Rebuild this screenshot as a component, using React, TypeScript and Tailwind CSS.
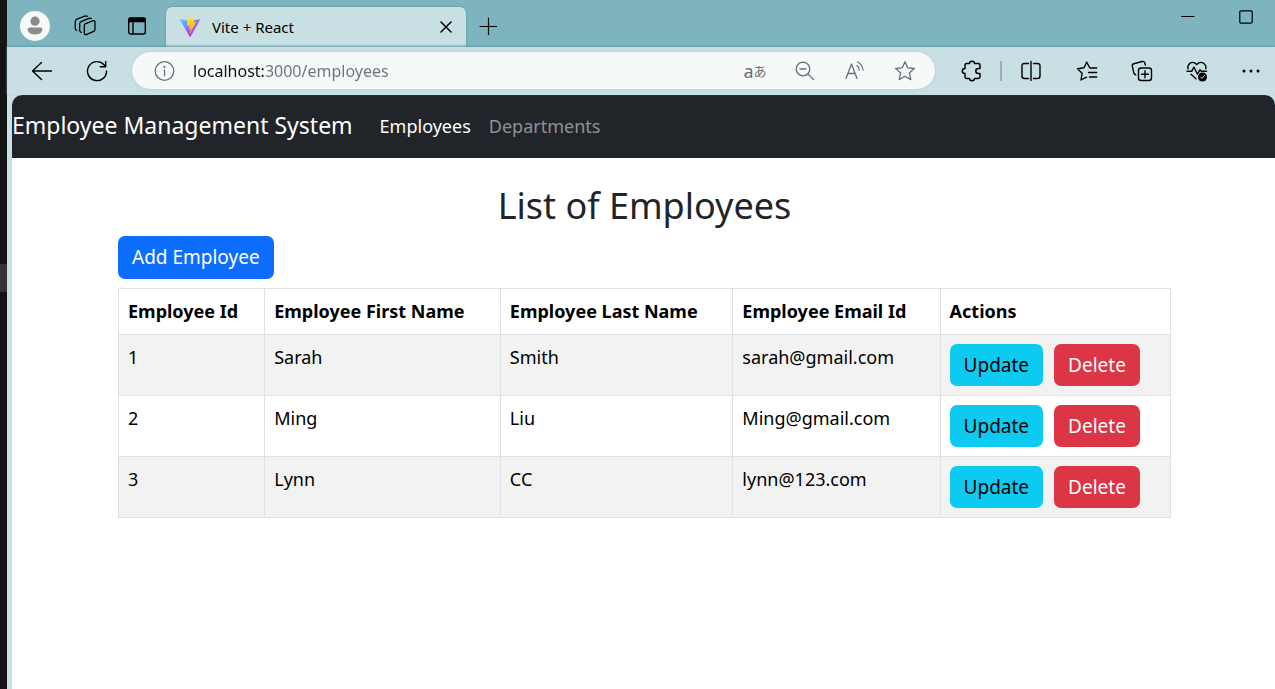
import React from "react";

type Employee = { id: number; first: string; last: string; email: string };

const employees: Employee[] = [
  { id: 1, first: "Sarah", last: "Smith", email: "sarah@gmail.com" },
  { id: 2, first: "Ming", last: "Liu", email: "Ming@gmail.com" },
  { id: 3, first: "Lynn", last: "CC", email: "lynn@123.com" },
];

function Icon({ size = 22, width = 1.4, children }: { size?: number; width?: number; children: React.ReactNode }) {
  return (
    <svg
      width={size}
      height={size}
      viewBox={`0 0 ${size} ${size}`}
      fill="none"
      stroke="currentColor"
      strokeWidth={width}
      strokeLinecap="round"
      strokeLinejoin="round"
      aria-hidden="true"
      className="shrink-0"
    >
      {children}
    </svg>
  );
}

function IconButton({ label, className, children }: { label: string; className: string; children: React.ReactNode }) {
  return (
    <button type="button" aria-label={label} className={`flex h-9 shrink-0 items-center justify-center ${className}`}>
      {children}
    </button>
  );
}

function ViteLogo() {
  return (
    <svg width="20" height="20" viewBox="0 0 256 257" aria-hidden="true" className="shrink-0">
      <defs>
        <linearGradient id="viteBody" x1="0%" x2="58%" y1="8%" y2="79%">
          <stop offset="0%" stopColor="#41D1FF" />
          <stop offset="100%" stopColor="#BD34FE" />
        </linearGradient>
        <linearGradient id="viteBolt" x1="43%" x2="50%" y1="2%" y2="89%">
          <stop offset="0%" stopColor="#FFEA83" />
          <stop offset="8%" stopColor="#FFDD35" />
          <stop offset="100%" stopColor="#FFA800" />
        </linearGradient>
      </defs>
      <path
        fill="url(#viteBody)"
        d="M255.153 37.938L134.897 252.976c-2.483 4.44-8.862 4.466-11.382.048L.875 37.958c-2.746-4.814 1.371-10.646 6.827-9.67l120.385 21.517a6.537 6.537 0 0 0 2.322-.004l117.867-21.483c5.438-.991 9.574 4.796 6.877 9.62Z"
      />
      <path
        fill="url(#viteBolt)"
        d="M185.432.063L96.44 17.501a3.268 3.268 0 0 0-2.634 3.014l-5.474 92.456a3.268 3.268 0 0 0 3.997 3.378l24.777-5.718c2.318-.535 4.413 1.507 3.936 3.838l-7.361 36.047c-.495 2.426 1.782 4.5 4.151 3.78l15.304-4.649c2.372-.72 4.652 1.36 4.15 3.788l-11.698 56.621c-.732 3.542 3.979 5.473 5.943 2.437l1.313-2.028l72.516-144.72c1.215-2.423-.88-5.186-3.54-4.672l-25.505 4.922c-2.396.462-4.435-1.77-3.759-4.114l16.646-57.705c.677-2.35-1.37-4.583-3.769-4.113Z"
      />
    </svg>
  );
}

function TitleBar() {
  return (
    <header className="flex h-[47px] items-start bg-[#7eb4be] pl-[3px] text-black">
      <div className="flex items-center pt-2">
        <IconButton label="Profile" className="w-[50px]">
          <svg width="30" height="30" viewBox="0 0 30 30" aria-hidden="true">
            <circle cx="15" cy="15" r="15" fill="#f7f9f9" />
            <circle cx="15" cy="10.2" r="4.6" fill="#8b8b8b" />
            <path d="M9.500 16.500h11a1.800 1.800 0 0 1 1.800 1.800c0 3.500-3.300 5.200-7.300 5.200s-7.300-1.700-7.300-5.200a1.800 1.800 0 0 1 1.800-1.800Z" fill="#8b8b8b" />
          </svg>
        </IconButton>
        <IconButton label="Workspaces" className="w-[50px]">
          <Icon width={1.3}>
            <path d="M11.200 8.800 18.500 5.900Q21 5.100 21 7.300V14.300Q21 15.700 19.700 16.300L12.800 19.300Q10.300 20.200 10.300 18V10.400Q10.300 9.300 11.200 8.800Z" />
            <path d="M17.300 3.500Q16.500 2.700 15 3.300L7.500 6.300Q5.700 7.200 5.700 8.800V15.500Q5.700 17 7.300 17.300" />
            <path d="M13.200 1.300Q12.300 .600 10.800 1.200L3 4.200Q1.200 5 1.200 6.800V13.500Q1.200 15 2.800 15.500" />
          </Icon>
        </IconButton>
        <IconButton label="Tab actions" className="w-[54px]">
          <Icon size={20}>
            <rect x="1.700" y="2" width="16.600" height="16" rx="2" />
            <path d="M2 2.500h16v3H2z" fill="currentColor" />
            <path d="M6 6v12" />
          </Icon>
        </IconButton>
      </div>
      <div className="mt-[7px] ml-[2px] flex h-10 w-[300px] items-center rounded-t-md bg-[#c8dfe3] pr-[10px] pl-[14px] shadow-[0_0_2px_#4d838d]">
        <ViteLogo />
        <span className="ml-3 flex-1 text-[15px] leading-5">Vite + React</span>
        <IconButton label="Close tab" className="w-5">
          <Icon size={12} width={1.5}>
            <path d="m1 1 10 10M11 1 1 11" />
          </Icon>
        </IconButton>
      </div>
      <IconButton label="New tab" className="mt-2 w-[43px]">
        <Icon size={18} width={1.2}>
          <path d="M9.500 1v17M1 9.500h17" />
        </Icon>
      </IconButton>
      <div className="ml-auto flex">
        <IconButton label="Minimize" className="h-[34px] w-[57px]">
          <Icon size={14} width={1}>
            <path d="M.500 6.500h12.500" />
          </Icon>
        </IconButton>
        <IconButton label="Maximize" className="h-[34px] w-[59px]">
          <Icon size={14} width={1.2}>
            <rect x=".800" y=".800" width="12.400" height="12.400" rx="1.200" />
          </Icon>
        </IconButton>
      </div>
    </header>
  );
}

function Toolbar() {
  return (
    <div className="relative flex h-12 items-center bg-[#c8dfe3] pb-px pl-[7px] text-black shadow-[0_-1px_2px_#5f98a3]">
      <IconButton label="Back" className="w-[55px]">
        <Icon>
          <path d="M1.500 11h19M10.500 2.500 1.500 11l9 8.500" />
        </Icon>
      </IconButton>
      <IconButton label="Refresh" className="w-[55px]">
        <Icon>
          <path d="M20.500 11a9.500 9.500 0 1 1-2.500-6.300L19.500 6.500M19.700 1.500v5.300h-5.500" />
        </Icon>
      </IconButton>
      <div className="ml-2 flex h-[37px] flex-1 items-center rounded-full bg-[#f5f9fa] pr-[5px] pl-[22px] text-[#6c7072] shadow-[0_0_3px_#b2ccd1]">
        <Icon width={1.3}>
          <circle cx="10.500" cy="11" r="9.300" />
          <path d="M10.500 10v5.500" />
          <circle cx="10.500" cy="6.800" r=".500" fill="currentColor" />
        </Icon>
        <input
          type="text"
          aria-label="Address"
          defaultValue="localhost:3000/employees"
          className="ml-[17px] h-8 min-w-0 flex-1 bg-[linear-gradient(90deg,#111_72px,#6f7375_72px)] bg-clip-text text-base text-transparent caret-black outline-none"
        />
        <IconButton label="Translate" className="w-[50px]">
          <span className="flex items-center leading-6">
            <span className="text-lg leading-6">a</span>
            <span className="font-['Noto_Sans_CJK_JP',sans-serif] text-[13px] leading-5">あ</span>
          </span>
        </IconButton>
        <IconButton label="Zoom out" className="w-[50px]">
          <Icon width={1.3}>
            <circle cx="9" cy="9" r="6.800" />
            <path d="m14 14 5.500 5.500M6 9h6" />
          </Icon>
        </IconButton>
        <IconButton label="Read aloud" className="w-[50px]">
          <Icon width={1.3}>
            <path d="M2 18.500 7.500 4 13 18.500M4 13.500h7M13 5.500q2.200 1.500 2.200 4.500M13.500 2q5 2.500 5.500 8" />
          </Icon>
        </IconButton>
        <IconButton label="Add to favorites" className="w-[50px]">
          <Icon width={1.3}>
            <path d="M11 1.800 13.700 7.800 20.300 8.500 15.400 13 16.800 19.600 11 16.300 5.200 19.600 6.600 13 1.700 8.500 8.300 7.800Z" />
          </Icon>
        </IconButton>
      </div>
      <IconButton label="Extensions" className="ml-[9px] w-[55px]">
        <Icon width={1.5}>
          <path d="M7.300 3.500H5.700Q4 3.500 4 5.200V8.500Q1.300 8.500 1.300 11T4 13.500V16.800Q4 18.500 5.700 18.500H8.500Q8.500 20.700 11 20.700T13.500 18.500H17.300Q19 18.500 19 16.800V13.500H17.500Q14.800 13.500 14.800 11T17.500 8.500H19V5.200Q19 3.500 17.300 3.500H13.500Q13.500 1.300 11 1.300T8.500 3.500Z" />
        </Icon>
      </IconButton>
      <span className="mx-px h-5 w-[2px] bg-[#9cb1b5]" />
      <IconButton label="Split screen" className="w-[56px]">
        <Icon>
          <path d="M8.500 3.500H4.500Q2 3.500 2 6V16Q2 18.500 4.500 18.500H8.500M13.500 3.500H17.500Q20 3.500 20 6V16Q20 18.500 17.500 18.500H13.500M11 1.500v19" />
        </Icon>
      </IconButton>
      <IconButton label="Favorites" className="w-[55px]">
        <Icon>
          <path d="M14.500 7.800 13.500 7.500 10.700 2 8 7.700 1.500 8.700 6.100 13.300 5 20 10.500 17.200M14 8h6.700M12.500 12.500h8.200M13.500 17h7.200" />
        </Icon>
      </IconButton>
      <IconButton label="Collections" className="w-[55px]">
        <Icon>
          <rect x="7.500" y="8" width="13" height="12.500" rx="2.500" />
          <path d="M14 10.700v7M10.500 14.200h7M4.700 14.800Q3.300 14.500 2.900 13L1.300 6.200Q.900 4.200 2.800 3.700L11 1.500Q13 1 13.700 2.800L14.400 5" />
        </Icon>
      </IconButton>
      <IconButton label="Browser essentials" className="w-[55px]">
        <Icon>
          <path d="M2 8.700Q1.200 5.300 4 3.200Q7.500 1 10.700 4.500Q14 1 17.500 3.200Q20.500 5.300 19.800 8.700M1 11.300h4.700L8 7.200l3.500 7L14 9.800l1.300 1.500H20.500M5 14.300l5 4.500" />
          <circle cx="16.500" cy="17" r="4.500" fill="currentColor" stroke="none" />
          <path d="m14.700 17.200 1.200 1.200 2.500-2.800" stroke="#c8dfe3" strokeWidth="1" />
        </Icon>
      </IconButton>
      <IconButton label="Settings and more" className="w-[51px]">
        <Icon>
          <g fill="currentColor" stroke="none">
            <circle cx="5" cy="11" r="1.500" />
            <circle cx="12" cy="11" r="1.500" />
            <circle cx="19" cy="11" r="1.500" />
          </g>
        </Icon>
      </IconButton>
    </div>
  );
}

function EmployeeTable() {
  const cell = "border border-[#dee2e6] p-[9px]";
  return (
    <table className="mt-[9px] w-full table-fixed border-collapse text-left text-lg leading-[27px] text-black">
      <colgroup>
        <col className="w-[13.9%]" />
        <col className="w-[22.4%]" />
        <col className="w-[22.1%]" />
        <col className="w-[19.7%]" />
        <col className="w-[21.9%]" />
      </colgroup>
      <thead>
        <tr>
          {["Employee Id", "Employee First Name", "Employee Last Name", "Employee Email Id", "Actions"].map((title) => (
            <th key={title} scope="col" className="border border-[#dee2e6] p-[9px] font-bold whitespace-nowrap">
              {title}
            </th>
          ))}
        </tr>
      </thead>
      <tbody>
        {employees.map((employee) => (
          <tr key={employee.id} className="align-top odd:bg-[#f2f2f2]">
            <td className={cell}>{employee.id}</td>
            <td className={cell}>{employee.first}</td>
            <td className={cell}>{employee.last}</td>
            <td className={cell}>{employee.email}</td>
            <td className={cell}>
              <div className="flex gap-[11px] text-[19px] leading-7">
                <button type="button" className="rounded-[7px] bg-[#0dcaf0] px-[14px] py-[7px] text-black">
                  Update
                </button>
                <button type="button" className="rounded-[7px] bg-[#dc3545] px-[14px] py-[7px] text-white">
                  Delete
                </button>
              </div>
            </td>
          </tr>
        ))}
      </tbody>
    </table>
  );
}

export default function App() {
  return (
    <div className="flex min-h-screen bg-[#141414] font-['Noto_Sans',sans-serif]">
      <div className="w-[7px] shrink-0 pt-[264px]">
        <div className="h-7 bg-[#333238]" />
      </div>
      <div className="flex min-w-0 flex-1 flex-col bg-[#c8dfe3]">
        <TitleBar />
        <Toolbar />
        <div className="ml-[5px] flex-1 overflow-hidden rounded-t-[10px] bg-white">
          <nav className="flex h-[63px] items-center bg-[#212529] pb-[2px] text-lg">
            <a href="#home" className="text-[23px] text-white">
              Employee Management System
            </a>
            <a href="#employees" className="ml-[27px] text-white">
              Employees
            </a>
            <a href="#departments" className="ml-[18px] text-[#909294]">
              Departments
            </a>
          </nav>
          <main className="mx-auto max-w-[1055px] pt-[25px] pl-[2px]">
            <h1 className="mb-2 text-center text-4xl leading-[45px] text-[#212529]">List of Employees</h1>
            <button type="button" className="block rounded-[7px] bg-[#0d6efd] px-[14px] py-[7px] text-[19px] leading-[29px] text-white">
              Add Employee
            </button>
            <EmployeeTable />
          </main>
        </div>
      </div>
    </div>
  );
}
